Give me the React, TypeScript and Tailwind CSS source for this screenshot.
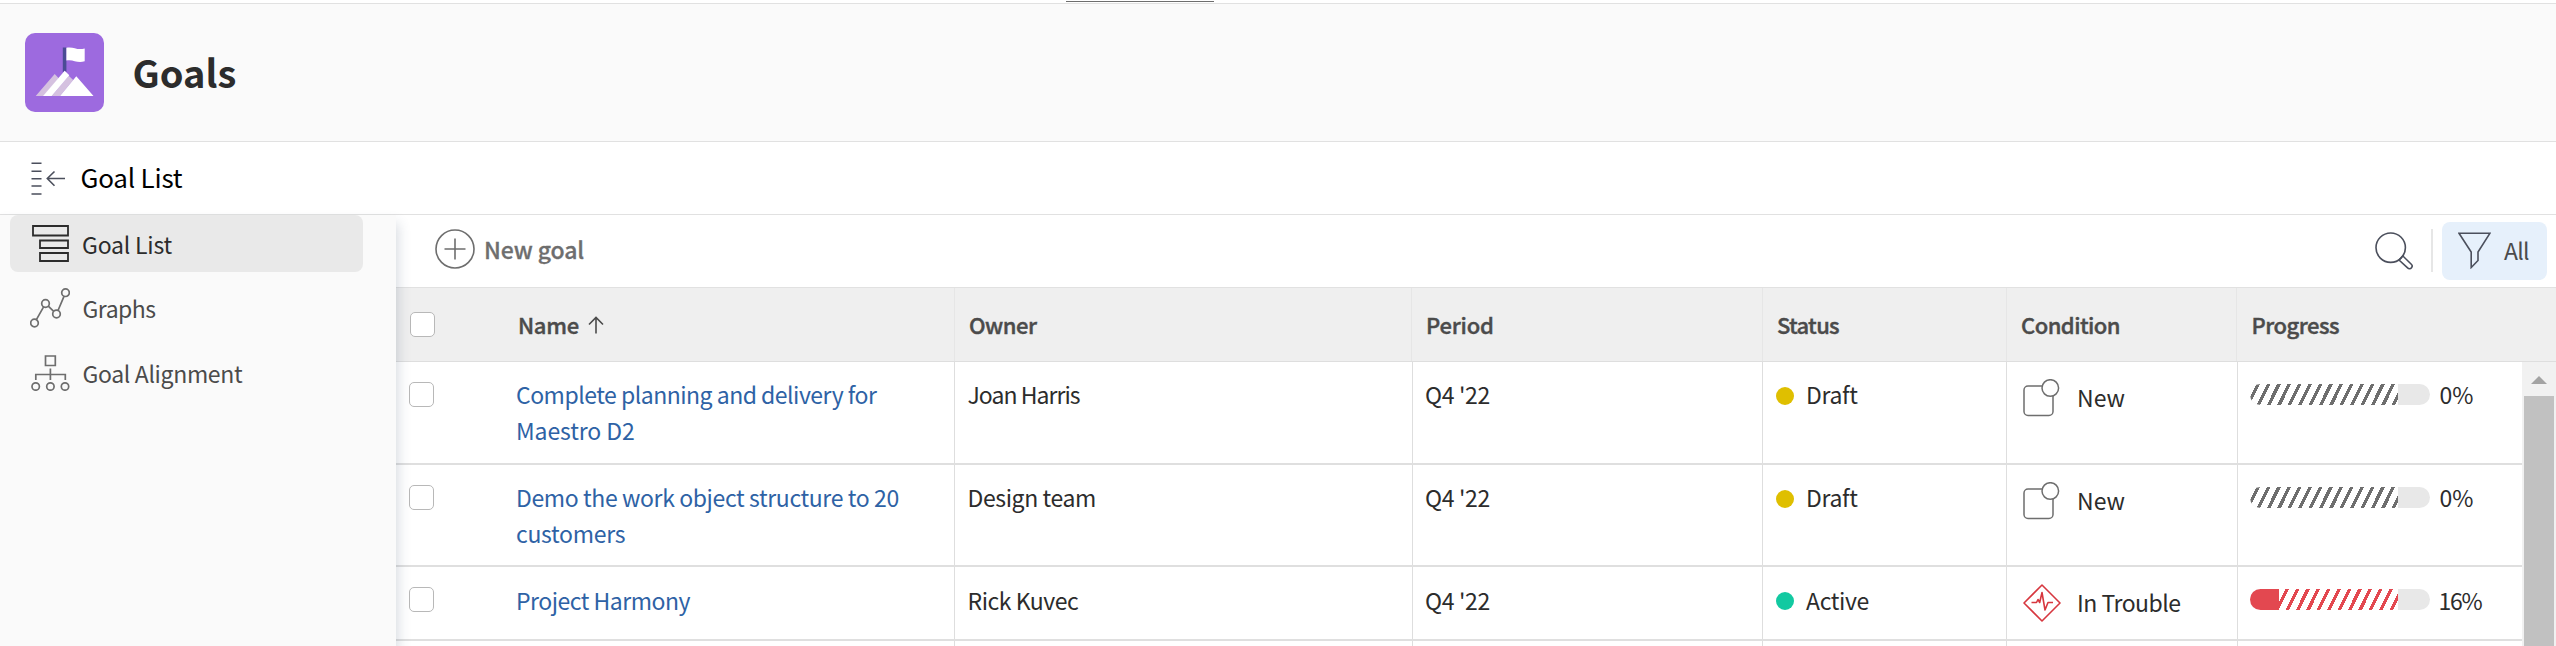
type Row = {
  id: string;
  name: { text: string; tracking: string }[];
  owner: string;
  ownerTracking: string;
  period: string;
  status: "Draft" | "Active";
  condition: "New" | "In Trouble";
  progress: number;
  height: string;
  textTop: string;
};

const rows: Row[] = [
  {
    id: "maestro",
    name: [
      { text: "Complete planning and delivery for", tracking: "tracking-[-0.5px]" },
      { text: "Maestro D2", tracking: "tracking-[-0.1px]" },
    ],
    owner: "Joan Harris",
    ownerTracking: "tracking-[-0.95px]",
    period: "Q4 '22",
    status: "Draft",
    condition: "New",
    progress: 0,
    height: "h-[103px]",
    textTop: "pt-[14px]",
  },
  {
    id: "demo",
    name: [
      { text: "Demo the work object structure to 20", tracking: "tracking-[-0.38px]" },
      { text: "customers", tracking: "tracking-[-0.3px]" },
    ],
    owner: "Design team",
    ownerTracking: "tracking-[-0.4px]",
    period: "Q4 '22",
    status: "Draft",
    condition: "New",
    progress: 0,
    height: "h-[102px]",
    textTop: "pt-[14px]",
  },
  {
    id: "harmony",
    name: [{ text: "Project Harmony", tracking: "tracking-[-0.5px]" }],
    owner: "Rick Kuvec",
    ownerTracking: "tracking-[-0.45px]",
    period: "Q4 '22",
    status: "Active",
    condition: "In Trouble",
    progress: 16,
    height: "h-[74px]",
    textTop: "pt-[15px]",
  },
];

const columns = "grid grid-cols-[559px_458px_350px_244px_231px_284px]";

function GoalsLogo() {
  return (
    <svg width="79" height="79" viewBox="0 0 79 79" className="shrink-0">
      <rect width="79" height="79" rx="10" fill="#9d6adf" />
      <path d="M10.7 63 29.7 41l4 4.3L18.5 63zM26.7 63l17-20.3 4.5 4.3L35 63z" fill="#d5c1e0" />
      <path d="M18 63 39.7 37.7l4.6 4.6L26.7 63zM35 63l16.3-19.8L68.5 63z" fill="#fff" />
      <path d="M37.8 14.5h3.6V39l-1.7-1.5-1.9 1.8z" fill="#4a4b94" />
      <path d="M41.4 14.7c7.5-1.5 10 3 18.3.8v12.8c-8 2.5-11-2.3-18.3-.8z" fill="#fff" />
    </svg>
  );
}

function CollapseIcon() {
  return (
    <svg width="34" height="34" viewBox="0 0 34 34" fill="none" stroke="#4b4f5c" strokeWidth="1.6">
      <path d="M.5 1.2h10M.5 9.2h10M.5 16.7h10M.5 24h10M.5 32h10M16 16.5h18M23.5 9.5l-7.2 7 7.2 7.2" />
    </svg>
  );
}

function GoalListIcon() {
  return (
    <svg width="37" height="38" viewBox="0 0 37 38" fill="none" stroke="#2c2c2c" strokeWidth="1.8">
      <path d="M1 1h35v9.5H1zM8 15.5h28V23H8zM8 28h28v8H8z" />
    </svg>
  );
}

function GraphsIcon() {
  return (
    <svg width="40" height="40" viewBox="0 0 40 40" fill="none" stroke="#6e6e6e" strokeWidth="1.7">
      <circle cx="4.5" cy="35" r="3.8" />
      <circle cx="15.5" cy="15.5" r="3.8" />
      <circle cx="26.5" cy="26" r="3.8" />
      <circle cx="35.5" cy="4.7" r="3.8" />
      <path d="M6.4 31.6l7.2-12.7M18.3 18.2l5.4 5.2M28 22.5l6-14.2" />
    </svg>
  );
}

function AlignmentIcon() {
  return (
    <svg width="39" height="36" viewBox="0 0 39 36" fill="none" stroke="#6e6e6e" strokeWidth="1.7">
      <path d="M14.5 1h9.8v9.5h-9.8zM19.4 13.5V25M4.8 25v-5.5h29.5V25" />
      <circle cx="4.7" cy="31.5" r="3.7" />
      <circle cx="19.4" cy="31.5" r="3.7" />
      <circle cx="34" cy="31.5" r="3.7" />
    </svg>
  );
}

function PlusIcon() {
  return (
    <svg width="40" height="40" viewBox="0 0 40 40" fill="none" stroke="#6e6e6e" strokeWidth="1.6">
      <circle cx="20" cy="20" r="19" />
      <path d="M20 9.5v21M9.5 20h21" />
    </svg>
  );
}

function SearchIcon() {
  return (
    <svg width="38" height="38" viewBox="0 0 38 38" fill="none" stroke="#4b4f5c" strokeWidth="1.6">
      <circle cx="15.7" cy="15.7" r="14.7" />
      <path d="M24 28l3.7-4.2 8.6 8.4a2.6 2.6 0 0 1 .2 3.5 2.6 2.6 0 0 1-3.9.2z" />
    </svg>
  );
}

function FilterIcon() {
  return (
    <svg width="33" height="37" viewBox="0 0 33 37" fill="none" stroke="#4b4f5c" strokeWidth="1.6">
      <path d="M1 1.2h31L20 20v8.5l-6.8 7V20z" />
    </svg>
  );
}

function SortIcon() {
  return (
    <svg width="16" height="18" viewBox="0 0 16 18" fill="none" stroke="#4b4b4b" strokeWidth="1.6" className="mt-[4px] ml-[9px]">
      <path d="M8 17.5v-16M1 8.5l7-7 7 7" />
    </svg>
  );
}

function NewIcon() {
  return (
    <svg width="37" height="38" viewBox="0 0 37 38" fill="none" stroke="#6e6e6e" strokeWidth="1.5">
      <rect x="1" y="7" width="29" height="29.5" rx="4" />
      <circle cx="27.3" cy="9" r="8.3" fill="#fff" />
    </svg>
  );
}

function TroubleIcon() {
  return (
    <svg width="38" height="38" viewBox="0 0 38 38" fill="none" stroke="#d7373f" strokeWidth="1.6" strokeLinejoin="round">
      <path d="M19 1l18 18-18 18L1 19z" />
      <path d="M8.5 18.5h5l1.5-3 1.7 3L19 8.5 22 26l3-7.5h5" />
    </svg>
  );
}

function Checkbox() {
  return <span className="block size-[25px] shrink-0 rounded-[5px] border border-[#b8b8b8] bg-white" />;
}

function ProgressBar({ value }: { value: number }) {
  const done = Math.round(value * 1.81);
  const color = value > 0 ? "#e34850" : "#6e6e6e";
  const lines = Array.from({ length: 18 }, (_, i) => done - 2.2 + i * 10.4);
  return (
    <div className="flex h-[21px] w-[180px] overflow-hidden rounded-full bg-[#e8e8e8]">
      <svg width="148" height="21" viewBox="0 0 148 21" shapeRendering="crispEdges" className="bg-white">
        {lines.map((x) => (
          <path key={x} d={`M${x - 1.8} 21L${x + 8.6} 0h3.6L${x + 1.8} 21z`} fill={color} />
        ))}
        <rect width={done} height="21" fill={color} />
      </svg>
    </div>
  );
}

export default function App() {
  return (
    <div className="flex h-[646px] w-full flex-col overflow-hidden bg-white font-['Noto_Sans_CJK_SC',sans-serif] text-[23px] text-[#2c2c2c]">
      <div className="h-[4px] shrink-0 border-b border-[#e1e1e1] pt-px pl-[1066px]">
        <div className="h-px w-[148px] bg-[#6e6e6e]" />
      </div>
      <header className="flex h-[138px] shrink-0 border-b border-[#e1e1e1] bg-[#fafafa] pt-[29px] pl-[25px]">
        <GoalsLogo />
        <h1 className="mt-[17px] ml-[28.5px] text-[38px] leading-[44px] font-bold">Goals</h1>
      </header>
      <div className="flex h-[73px] shrink-0 border-b border-[#e1e1e1] pt-[20px] pl-[31px] text-black">
        <CollapseIcon />
        <span className="mt-[-2px] ml-[15.5px] text-[26px] leading-[33px] tracking-[-0.2px]">Goal List</span>
      </div>
      <div className="flex min-h-0 flex-1">
        <nav className="relative z-10 w-[396px] shrink-0 bg-[#fafafa] pl-[10px] text-[#4b4b4b] shadow-[2px_8px_12px_rgba(50,70,100,0.2)]">
          <div className="flex h-[57px] w-[353px] rounded-lg bg-[#e9e9e9] pt-[10px] pl-[22px] text-[#2c2c2c]">
            <GoalListIcon />
            <span className="mt-[2px] ml-[13px] leading-[34px] tracking-[-0.2px]">Goal List</span>
          </div>
          <div className="flex h-[64px] pt-[16px] pl-[20px]">
            <GraphsIcon />
            <span className="mt-[3px] ml-[12.5px] leading-[34px] tracking-[-0.5px]">Graphs</span>
          </div>
          <div className="flex h-[64px] pt-[19px] pl-[20.5px]">
            <AlignmentIcon />
            <span className="ml-[13px] leading-[36px] tracking-[-0.35px]">Goal Alignment</span>
          </div>
        </nav>
        <main className="flex min-w-0 flex-1 flex-col">
          <div className="flex h-[73px] shrink-0 items-start border-b border-[#e1e1e1] pl-[39px]">
            <span className="mt-[14px]">
              <PlusIcon />
            </span>
            <span className="mt-[17px] ml-[9px] leading-[34px] font-medium tracking-[-0.1px] text-[#6e6e6e] [-webkit-text-stroke:0.3px]">New goal</span>
            <span className="mt-[17px] ml-auto">
              <SearchIcon />
            </span>
            <span className="mt-[14px] ml-[18px] h-[43px] w-[2px] bg-[#e6e6e6]" />
            <span className="mt-[7px] mr-[9px] ml-[9px] flex h-[58px] w-[105px] rounded-lg bg-[#e6f0fb] pt-[10px] pl-[16px]">
              <FilterIcon />
              <span className="mt-[1px] ml-[13px] leading-[34px] tracking-[-0.8px] text-[#4b4b4b]">All</span>
            </span>
          </div>
          <div className="flex h-[74px] shrink-0 items-stretch border-b border-[#dedede] bg-[#efefef] text-[22px] leading-[24px] font-medium text-[#4b4b4b] [-webkit-text-stroke:0.4px]">
            <div className="flex w-[559px] border-r border-[#e6e6e6] pt-[24px] pl-[14px]">
              <Checkbox />
              <span className="ml-[83px] tracking-[-0.3px]">Name</span>
              <SortIcon />
            </div>
            <div className="w-[457px] border-r border-[#e6e6e6] pt-[24px] pl-[14px] tracking-[-0.5px]">Owner</div>
            <div className="w-[351px] border-r border-[#e6e6e6] pt-[24px] pl-[14px] tracking-[-0.2px]">Period</div>
            <div className="w-[244px] border-r border-[#e6e6e6] pt-[24px] pl-[14px] tracking-[-0.7px]">Status</div>
            <div className="w-[230px] border-r border-[#e6e6e6] pt-[24px] pl-[14px] tracking-[-0.55px]">Condition</div>
            <div className="pt-[24px] pl-[14.5px] tracking-[-0.5px]">Progress</div>
          </div>
          <div className="flex min-h-0 flex-1">
            <div className="flex-1">
              {rows.map((row) => (
                <div key={row.id} className={`${columns} ${row.height} border-b-2 border-[#dfdfdf] leading-[36px]`}>
                  <div className="flex border-r border-[#dedede] pl-[13px]">
                    <span className="pt-[20px]">
                      <Checkbox />
                    </span>
                    <a className={`ml-[82px] text-[#2e62a5] ${row.textTop}`}>
                      {row.name.map((line) => (
                        <span key={line.text} className={`block whitespace-nowrap ${line.tracking}`}>
                          {line.text}
                        </span>
                      ))}
                    </a>
                  </div>
                  <div className={`border-r border-[#dedede] pl-[12.5px] ${row.textTop} ${row.ownerTracking}`}>{row.owner}</div>
                  <div className={`border-r border-[#dedede] pl-[12px] tracking-[-0.35px] ${row.textTop}`}>{row.period}</div>
                  <div className="flex border-r border-[#dedede] pl-[13px]">
                    <span className={`mt-[25px] size-[18px] rounded-full ${row.status === "Draft" ? "bg-[#dfbf00]" : "bg-[#12c9a1]"}`} />
                    <span className={`ml-[12px] tracking-[-0.35px] ${row.textTop}`}>{row.status}</span>
                  </div>
                  <div className="flex border-r border-[#dedede] pt-[17px] pl-[16px]">
                    {row.condition === "New" ? <NewIcon /> : <TroubleIcon />}
                    <span className={row.condition === "New" ? "ml-[17px]" : "ml-[16px] tracking-[-0.5px]"}>{row.condition}</span>
                  </div>
                  <div className="flex pl-[12px]">
                    <span className="pt-[22px]">
                      <ProgressBar value={row.progress} />
                    </span>
                    <span className={`${row.textTop} ${row.progress > 0 ? "ml-[8.5px] tracking-[-1.3px]" : "ml-[9.5px]"}`}>{row.progress}%</span>
                  </div>
                </div>
              ))}
              <div className={`${columns} h-[6px]`}>
                {[0, 1, 2, 3, 4].map((c) => (
                  <div key={c} className="border-r border-[#dedede]" />
                ))}
              </div>
            </div>
            <div className="flex w-[34px] shrink-0 flex-col items-center bg-[#f1f1f1]">
              <svg width="16" height="8" viewBox="0 0 16 8" className="mt-[14px] mb-[12px] shrink-0">
                <path d="M0 8 8 0l8 8z" fill="#a3a3a3" />
              </svg>
              <div className="w-[30px] flex-1 bg-[#c1c1c1]" />
            </div>
          </div>
        </main>
      </div>
    </div>
  );
}
